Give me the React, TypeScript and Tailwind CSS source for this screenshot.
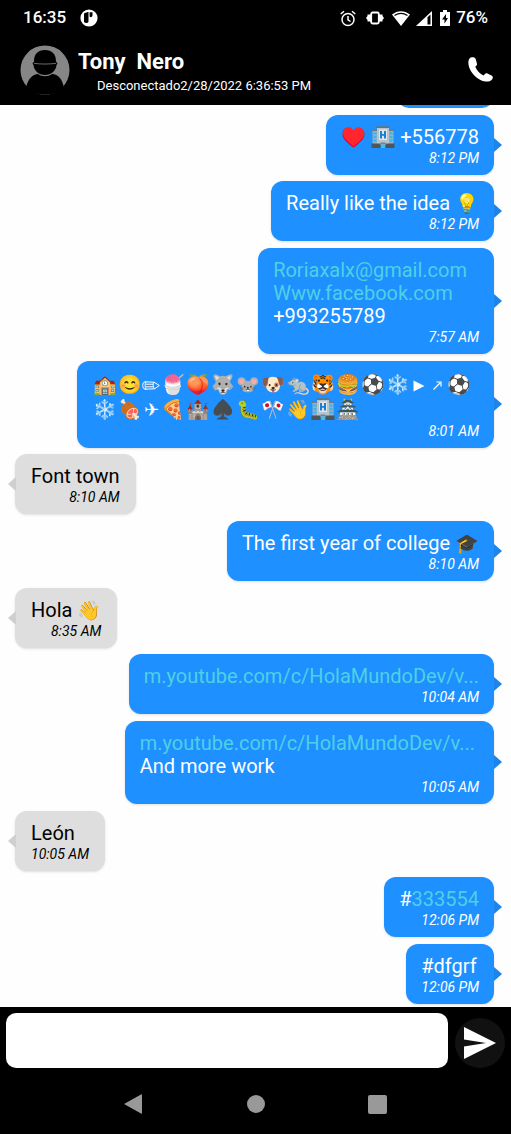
import React from "react";

type Message = { out?: boolean; time: string; lines: React.ReactNode[]; emojiRows?: boolean; pad?: string };

const Link = ({ href, children }: { href: string; children: React.ReactNode }) => (
  <a href={href} className="text-[#4ed0e4]">{children}</a>
);

const E = ({ children }: { children: React.ReactNode }) => <span className="text-[19px]">{children}</span>;

const Hotel = () => (
  <svg viewBox="0 0 23 22" className="inline-block h-[22px] w-6 align-[-4px]" role="img" aria-label="Hotel">
    <path d="M1 4H6V20H1ZM17 4H22V20H17Z" fill="#8fb3c6" />
    <path d="M0.5 3.5H6V5H0.5ZM17 3.5H22.5V5H17Z" fill="#6d7c85" />
    <path d="M2 6.5H5V8.5H2ZM2 10H5V12H2ZM2 13.5H5V15.5H2ZM18 6.5H21V8.5H18ZM18 10H21V12H18ZM18 13.5H21V15.5H18Z" fill="#35b8f2" />
    <path d="M5.5 1H17.5V19H5.5Z" fill="#b9c4ca" />
    <path d="M5 0.3H18V2H5Z" fill="#65737b" />
    <path d="M7.5 3.5H15.5V14H7.5Z" fill="#dfe6e9" />
    <path d="M8.5 5H10.5V8H12.5V5H14.5V12.5H12.5V9.8H10.5V12.5H8.5Z" fill="#1c7fd0" />
    <path d="M0 17.5H9V22H0ZM14 17.5H23V22H14Z" fill="#4d565b" />
    <path d="M9 16.5H14V18.5H9Z" fill="#75838b" />
    <path d="M9.5 18.5H13.5V22H9.5Z" fill="#39c0f5" />
  </svg>
);

const Pencil = () => (
  <svg viewBox="0 0 18 9" className="inline-block h-[9px] w-[18px]" fill="none" stroke="#fff" strokeWidth="1" role="img" aria-label="Pencil">
    <path d="M3 0.8L12 1.2L17.3 4.5L12.5 7.8L3 8.2C0 8 0 1 3 0.8ZM12 1.2C10.8 3 10.8 6 12.5 7.8M4 0.8C2.8 3 2.8 6 4 8.2M4 3.2H11M4 5.8H11" />
  </svg>
);

const Play = () => (
  <svg viewBox="0 0 12 12" className="inline-block h-3 w-3" role="img" aria-label="Play">
    <path d="M0.5 0.5L11.5 6L0.5 11.5Z" fill="#fff" />
  </svg>
);

const ArrowUpRight = () => (
  <svg viewBox="0 0 9 9" className="inline-block h-[9px] w-[9px]" role="img" aria-label="Up right">
    <path d="M0.5 8.5L7 2M3.5 1H8V5.5" fill="none" stroke="#fff" strokeWidth="1.2" />
  </svg>
);

const Cells = ({ items }: { items: React.ReactNode[] }) => (
  <>
    {items.map((item, i) => (
      <span key={i} className="inline-block w-[25px] text-center text-[19px]">{item}</span>
    ))}
  </>
);

const Glyph = ({ children }: { children: React.ReactNode }) => (
  <span className="inline-block w-[18px] text-center text-[18px]">{children}</span>
);

const video = <Link href="https://m.youtube.com/c/HolaMundoDev">m.youtube.com/c/HolaMundoDev/v...</Link>;

const messages: Message[] = [
  { out: true, time: "8:12 PM", lines: [<>♥️ <Hotel /> +556778</>] },
  { out: true, time: "8:12 PM", lines: [<>Really like the idea <E>💡</E></>] },
  {
    out: true, time: "7:57 AM", pad: "pr-3",
    lines: [<Link href="mailto:Roriaxalx@gmail.com">Roriaxalx@gmail.com</Link>, <Link href="https://www.facebook.com">Www.facebook.com</Link>, "+993255789"],
  },
  {
    out: true, time: "8:01 AM", emojiRows: true, pad: "pr-2",
    lines: [
      <><Cells items={["🏫", "😊"]} /><Glyph><Pencil /></Glyph><Cells items={["🍧", "🍑", "🐺", "🐭", "🐶", "🐀", "🐯", "🍔", "⚽", "❄️"]} /><Glyph><Play /></Glyph><Glyph><ArrowUpRight /></Glyph><Cells items={["⚽"]} /></>,
      <><Cells items={["❄️", "🍖"]} /><Glyph>✈</Glyph><Cells items={["🍕", "🏰", "♠️", "🐛", "🎌", "👋", <Hotel />, "🏯"]} /></>,
    ],
  },
  { time: "8:10 AM", lines: ["Font town"] },
  { out: true, time: "8:10 AM", lines: [<>The first year of college <E>🎓</E></>] },
  { time: "8:35 AM", lines: [<>Hola <E>👋</E></>] },
  { out: true, time: "10:04 AM", lines: [video] },
  { out: true, time: "10:05 AM", pad: "pr-1", lines: [video, "And more work"] },
  { time: "10:05 AM", lines: ["León"] },
  { out: true, time: "12:06 PM", lines: [<>#<Link href="#333554">333554</Link></>] },
  { out: true, time: "12:06 PM", lines: ["#dfgrf"] },
];

function Bubble({ m }: { m: Message }) {
  return (
    <li className={m.out ? "relative mr-[17px] self-end rounded-xl bg-[#1e90ff] px-[15px] pt-[11px] pb-2 text-white shadow" : "relative ml-[15px] self-start rounded-xl bg-[#dedede] px-4 pt-[11px] pb-2 text-black shadow"}>
      <div className={m.pad}>
        {m.lines.map((line, i) => (
          <p key={i} className={m.emojiRows ? "h-[25px] text-[20px] leading-[25px] whitespace-nowrap" : "h-[23px] text-[20px] leading-[23px] whitespace-nowrap"}>{line}</p>
        ))}
      </div>
      <time className="block text-right text-[14px] leading-[18px] italic">{m.time}</time>
      <svg viewBox="0 0 8 14" className={m.out ? "absolute top-1/2 -right-2 h-3.5 w-2 -translate-y-1/2" : "absolute top-1/2 -left-[7px] h-3.5 w-2 -translate-y-1/2"}>
        {m.out ? <path d="M0 0L8 7L0 14Z" fill="#1c84ea" /> : <path d="M8 0L0 7L8 14Z" fill="#cfcfcf" />}
      </svg>
    </li>
  );
}

export default function App() {
  return (
    <div className="flex h-screen flex-col bg-black font-[Roboto,sans-serif] text-white">
      <header>
        <div className="flex h-9 items-center px-[23px] text-[17px] font-medium">
          <span>16:35</span>
          <svg viewBox="0 0 18 18" className="ml-[14px] h-[18px] w-[18px]">
            <circle cx="9" cy="9" r="8.6" fill="#fff" />
            <path d="M4 4.5C6 3.5 7.5 3 8.5 3V12.5C7.5 14.5 5.5 14.5 4 13Z" fill="#000" />
            <path d="M9.6 3.2H12.5V6.5C12 8.5 10.5 8.5 9.6 7.5Z" fill="#000" />
          </svg>
          <div className="ml-auto flex items-center">
            <svg viewBox="0 0 16 17" className="h-[17px] w-4" fill="none" stroke="#fff" strokeWidth="1.5">
              <circle cx="8" cy="9.5" r="6" />
              <path d="M8 6V9.8L10.5 11.5M0.7 4L4 1.2M15.3 4L12 1.2" />
            </svg>
            <svg viewBox="0 0 18 14" className="ml-2.5 h-3.5 w-[18px]">
              <path d="M0 7L1.5 5V3.5H5V10.5H1.5V9ZM18 7L16.5 5V3.5H13V10.5H16.5V9Z" fill="#fff" />
              <rect x="5.2" y="1.5" width="7.6" height="11" rx="1.5" fill="#000" stroke="#fff" strokeWidth="1.8" />
            </svg>
            <svg viewBox="0 0 18 15" className="ml-2 h-[15px] w-[18px]">
              <path d="M0 3.5C5.5-1 12.5-1 18 3.5L9 15Z" fill="#fff" />
              <path d="M2.5 4.6C6.5 1.8 11.5 1.8 15.5 4.6" fill="none" stroke="#000" strokeWidth="1.2" />
            </svg>
            <svg viewBox="0 0 16 15" className="ml-1.5 h-[15px] w-4">
              <path d="M0 15L16 0V15Z" fill="#fff" />
              <path d="M11.5 6.3L14.5 3.5V13.5H11.5Z" fill="#000" />
            </svg>
            <svg viewBox="0 0 10 16" className="ml-2 h-4 w-2.5">
              <path d="M0 2H3V0H7V2H10V16H0Z" fill="#fff" />
              <path d="M6 4L2 9.5H4.5V13.5L8 8H6Z" fill="#000" />
            </svg>
            <span className="ml-1.5">76%</span>
          </div>
        </div>
        <div className="flex h-[69px] items-center pr-[18px] pb-0.5 pl-5">
          <svg viewBox="0 0 50 50" className="h-[50px] w-[50px]">
            <circle cx="25" cy="25" r="24.5" fill="#868686" />
            <path d="M14 16.5C14 9 18 5 25 5S36 9 36 16.5L37.5 18.5L36.5 20C36 26 31 30 25 30S14 26 13.5 20L12.5 18.5Z" fill="#000" />
            <path d="M14 18.3C20 19.3 30 19.3 36 18.3" fill="none" stroke="#777" strokeWidth="0.9" />
            <path d="M6 43C8 33 13 29.5 18 29C22 32 28 32 32 29C38 29.5 42 33 44 43C38 51.5 12 51.5 6 43Z" fill="#000" />
          </svg>
          <div className="ml-2 flex-1 pt-[7px]">
            <h1 className="text-[22px] leading-[26px] font-bold whitespace-pre">Tony  Nero</h1>
            <p className="pl-[19px] text-[13px] leading-[22px]">Desconectado2/28/2022 6:36:53 PM</p>
          </div>
          <button aria-label="Call">
            <svg viewBox="0 0 25 25" className="h-[25px] w-[25px]" fill="#fff">
              <path d="M4 .3C2 .3 .7 2 .4 4.5C-.3 14 10 25 20 24.6C22.5 24.5 24.5 22.8 24.8 20.8C25 19.5 24 18.8 22.5 18L19 16.3C17.5 15.8 16.8 17.3 15.5 18.5C12 17 8.8 13.5 7.3 9.8C8.5 8.5 9.3 8 8.9 6.5L7.8 2.3C7.3 .7 6 .1 4 .3Z" />
            </svg>
          </button>
        </div>
      </header>
      <ul className="flex min-h-0 flex-1 flex-col justify-between overflow-hidden bg-[#fefefe] pb-[3px]">
        <li className="mr-[17px] flex h-[3px] w-[97px] flex-col justify-end self-end overflow-hidden">
          <div className="h-[60px] shrink-0 rounded-xl bg-[#1e90ff]" />
        </li>
        {messages.map((m, i) => <Bubble key={i} m={m} />)}
      </ul>
      <form className="flex items-center gap-[7px] px-1.5 pt-1.5" onSubmit={(e) => e.preventDefault()}>
        <input aria-label="Message" className="h-[55px] min-w-0 flex-1 rounded-[10px] bg-white px-3 text-[20px] text-black outline-none" />
        <button aria-label="Send" className="mt-1 flex h-[50px] w-[50px] items-center justify-center rounded-full bg-[#111]">
          <svg viewBox="0 0 32 32" className="h-8 w-8" fill="#fff"><path d="M0 0L32 16L0 32V19.5L22 16L0 12.5Z" /></svg>
        </button>
      </form>
      <nav className="flex h-[66px] items-center justify-center gap-[103px] pt-1.5">
        <button aria-label="Back" className="w-5"><svg viewBox="0 0 18 20" className="h-5 w-[18px]" fill="#999"><path d="M0 10L17 0.5Q18 0 18 1V19Q18 20 17 19.5Z" /></svg></button>
        <button aria-label="Home" className="h-[18px] w-[18px] rounded-full bg-[#999]" />
        <button aria-label="Recent apps" className="h-[19px] w-[19px] rounded-[2px] bg-[#999]" />
      </nav>
    </div>
  );
}
